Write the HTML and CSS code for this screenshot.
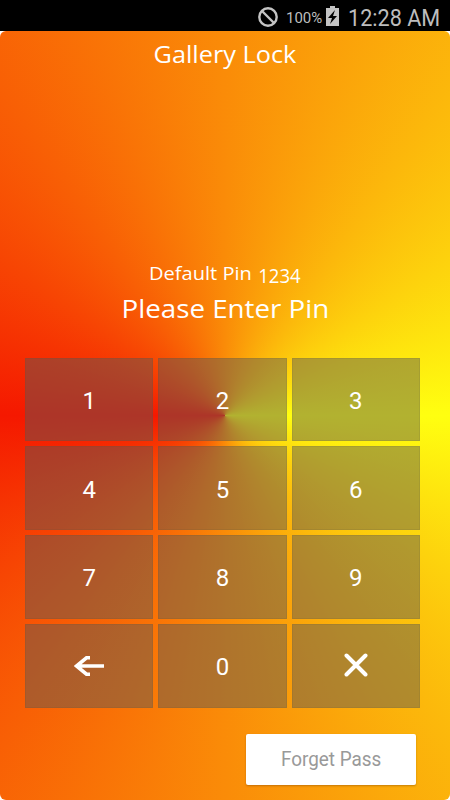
FILE: index.html
```html
<!DOCTYPE html>
<html lang="en">
<head>
<meta charset="utf-8">
<title>Gallery Lock</title>
<link rel="stylesheet" href="styles.css">
</head>
<body>
<header class="status">
  <svg class="blocked" viewBox="0 0 22 22"><circle cx="11" cy="11" r="8.700"/><path d="M5 5l12 12"/></svg>
  <span class="percent">100%</span>
  <svg class="battery" viewBox="0 0 13 20"><path class="shell" d="M4 0h5v2h4v18H0V2h4z"/><path class="bolt" d="M9 4L2 12h4l-2 6 7-8H7z"/></svg>
  <span class="clock">12:28 AM</span>
</header>
<main class="screen">
  <h1 class="title">Gallery Lock</h1>
  <p class="hint"><span class="hint-label">Default Pin</span><span class="hint-pin">1234</span></p>
  <p class="prompt">Please Enter Pin</p>
  <div class="keypad">
    <button class="key">1</button><button class="key">2</button><button class="key">3</button>
    <button class="key">4</button><button class="key">5</button><button class="key">6</button>
    <button class="key">7</button><button class="key">8</button><button class="key">9</button>
    <button class="key" aria-label="Back"><svg class="arrow" viewBox="0 0 30 20"><path d="M30 10H4M16 1.800H12.500L2.500 10l10 8.200H16"/></svg></button>
    <button class="key">0</button>
    <button class="key" aria-label="Clear"><svg class="cross" viewBox="0 0 24 24"><path d="M2.500 2.500l19 19M21.500 2.500l-19 19"/></svg></button>
  </div>
  <button class="forget"><span class="forget-label">Forget Pass</span></button>
</main>
</body>
</html>
```
FILE: styles.css
```css
* { box-sizing: border-box; }
body { margin: 0; width: 450px; height: 800px; overflow: hidden; background: linear-gradient(#000 31px, #fff 31px); }
h1, p { margin: 0; font-weight: 400; }
button { border: 0; padding: 0; }
.status {
  height: 31px; padding: 2px 10px 0 0; display: flex; justify-content: flex-end; align-items: center;
  background: #000; color: #bdbdbd; font-family: Roboto, sans-serif;
}
.blocked { width: 22px; height: 22px; fill: none; stroke: #c4c4c4; stroke-width: 2.4; margin-right: 7px; }
.percent { font-size: 15px; line-height: 20px; width: 36px; margin: 2px 4px 0 0; }
.battery { width: 13px; height: 20px; margin: -1px 9px 0 0; }
.shell { fill: #c4c4c4; }
.bolt { fill: #000; }
.clock {
  font-size: 23px; line-height: 29px; margin-top: 3px; width: 92px; white-space: nowrap;
  transform: scaleX(.94); transform-origin: left;
}
.screen {
  height: 769px; border-radius: 6px; display: flex; flex-direction: column; align-items: center;
  color: #fff; font-family: "Open Sans", sans-serif;
  background: conic-gradient(from 90deg at 225px 384.500px, #ffff10, #f51800 180deg, #ffff10 360deg);
}
.title { font-size: 23px; line-height: 30px; margin-top: 8px; white-space: nowrap; transform: scaleX(1.1); }
.hint { display: flex; width: 152px; justify-content: space-between; margin-top: 190px; height: 28px; font-size: 19px; line-height: 28px; white-space: nowrap; }
.hint-label { transform: scaleX(1.055); transform-origin: left; }
.hint-pin { padding-top: 3px; font-size: 20px; transform: scaleX(.93); transform-origin: right; }
.prompt { font-size: 26px; line-height: 36px; margin-top: 3px; white-space: nowrap; transform: scaleX(1.067); }
.keypad {
  width: 395px; height: 350px; margin: 31.500px 5px 0 0; flex: none; display: grid;
  grid-template: repeat(4, 1fr) / repeat(3, 1fr); gap: 5px;
}
.key {
  display: flex; align-items: center; justify-content: center; padding-top: 3px;
  background: rgba(87, 87, 87, .46); box-shadow: inset 0 0 0 1px rgba(80, 80, 60, .12);
  color: #fff; font: 24px Roboto, sans-serif;
}
.key svg { fill: none; stroke: #fff; }
.arrow { width: 30px; height: 20px; stroke-width: 3.600; margin-top: -3px; }
.cross { width: 24px; height: 24px; stroke-width: 4; margin-top: -4px; stroke-linecap: round; }
.forget {
  width: 170px; height: 51px; margin: 26px 34px 0 0; align-self: flex-end; border-radius: 2px;
  background: #fff; color: #999; font: 20px Roboto, sans-serif; box-shadow: 0 1px 2px rgba(120, 60, 0, .4);
}
.forget-label { display: inline-block; transform: scaleX(.945); }
```
